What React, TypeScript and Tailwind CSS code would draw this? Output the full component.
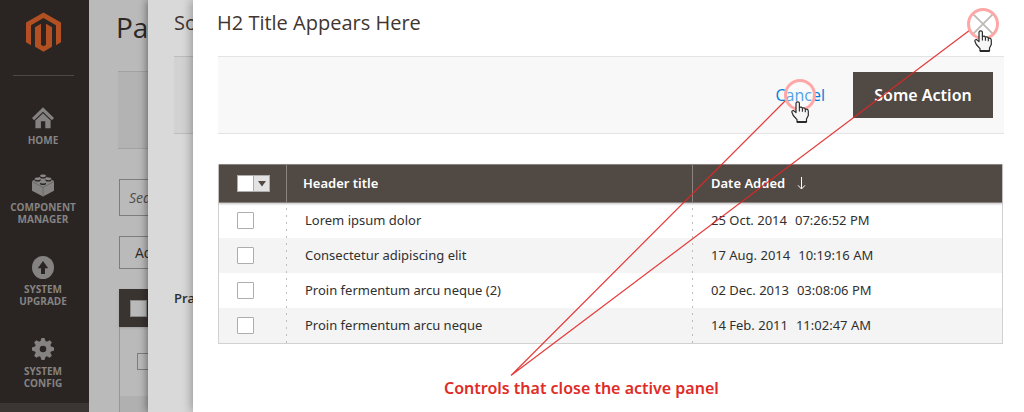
import React from "react";

const rows = [
  { title: "Lorem ipsum dolor", date: "25 Oct. 2014", time: "07:26:52 PM" },
  { title: "Consectetur adipiscing elit", date: "17 Aug. 2014", time: "10:19:16 AM" },
  { title: "Proin fermentum arcu neque (2)", date: "02 Dec. 2013", time: "03:08:06 PM" },
  { title: "Proin fermentum arcu neque", date: "14 Feb. 2011", time: "11:02:47 AM" },
];

function Logo() {
  return (
    <svg width="35" height="40" viewBox="0 0 35 40" fill="#b35023" role="img" aria-label="Logo">
      <path d="M17.5 0.4 35 10.4V30.3L30 33.2V13.3L17.5 6.1 5 13.3V33.2L0 30.3V10.4Z" />
      <path d="M9 15.2 15 11.8V32.8L17.5 34.3 20 32.8V11.8L26 15.2V34.8L17.5 39.8 9 34.8Z" />
    </svg>
  );
}

function HomeIcon() {
  return (
    <svg width="22" height="22" viewBox="0 0 22 22" fill="#858382" aria-hidden="true">
      <path d="M11 0.2 22 11 19.9 13.2 11 4.7 2.1 13.2 0 11Z" />
      <path d="M11 6.2 18.6 13.5V21.3H13.3V14.3H8.9V21.3H3.4V13.5Z" />
    </svg>
  );
}

function BrickIcon() {
  return (
    <svg width="22" height="23" viewBox="0 0 22 23" aria-hidden="true">
      <path d="M11 1.2 22 6.9V16.8L11 22.6 0 16.8V6.9Z" fill="#858382" />
      <path d="M0 7.5 11 13.4 22 7.5M11 13.4V22.6" stroke="#65615f" strokeWidth="0.8" fill="none" />
      {[
        [11, 2],
        [5.6, 5],
        [16.4, 5],
        [11, 8.4],
      ].map(([cx, cy]) => (
        <g key={`${cx}-${cy}`}>
          <ellipse cx={cx} cy={cy + 1} rx="3" ry="1.5" fill="#2a2522" />
          <ellipse cx={cx} cy={cy - 0.2} rx="3" ry="1.4" fill="#8b8988" />
        </g>
      ))}
    </svg>
  );
}

function UpgradeIcon() {
  return (
    <svg width="22" height="23" viewBox="0 0 22 23" aria-hidden="true">
      <ellipse cx="11" cy="11.5" rx="11" ry="11.5" fill="#858382" />
      <path d="M11 5 16.2 12.2H13V18H9V12.2H5.8Z" fill="#2a2522" />
    </svg>
  );
}

function GearIcon() {
  return (
    <svg width="22" height="22" viewBox="0 0 22 22" aria-hidden="true">
      <g fill="#858382">
        <circle cx="11" cy="11" r="8.2" />
        {[0, 45, 90, 135, 180, 225, 270, 315].map((a) => (
          <path key={a} d="M8.1 4.2 9.5 0H12.5L13.9 4.2Z" transform={`rotate(${a} 11 11)`} />
        ))}
      </g>
      <circle cx="11" cy="11" r="3.3" fill="#2a2522" />
    </svg>
  );
}

function Pointer() {
  return (
    <span className="pointer-events-none absolute top-1/2 left-1/2 -mt-4 -ml-4 block h-14 w-8">
      <svg width="32" height="48" viewBox="0 0 32 48" aria-hidden="true">
        <circle cx="16" cy="16" r="14.5" fill="#ffffff" fillOpacity="0.3" stroke="#ffa6a6" strokeWidth="3" />
        <path
          d="M12 24.3Q12 22.8 13.7 22.8 15.4 22.8 15.4 24.3V28.5Q17.6 27.4 18.4 29.2 20.6 28.3 21.3 30.3 24.3 29.6 24.3 32.5V36.5L22.5 40V43H13V40.6L9.3 36.5 7.9 33.3Q7.6 31.2 9.7 31.6L12 33.6Z"
          fill="#f6f6f6"
          stroke="#2b2b2b"
          strokeWidth="1.2"
          strokeLinejoin="round"
        />
        <path d="M13 43H22.5" stroke="#1f1f1f" strokeWidth="1.8" />
        <path d="M15.4 28.5V32.5M18.4 29.2V32.8M21.3 30.5V33.2" stroke="#2b2b2b" strokeWidth="1.1" />
      </svg>
    </span>
  );
}

function NavItem({ icon, lines }: { icon: React.ReactNode; lines: string[] }) {
  return (
    <a href="#" className="flex flex-col items-center gap-1 text-[10px] leading-3 font-bold text-[#858382]">
      <span className="flex h-6 items-center">{icon}</span>
      <span className="flex flex-col items-center">
        {lines.map((line) => (
          <span key={line}>{line}</span>
        ))}
      </span>
    </a>
  );
}

function Sidebar() {
  return (
    <nav className="flex w-[89px] shrink-0 flex-col bg-[#2a2522]">
      <div className="mr-[15px] ml-[13px] flex h-[76px] justify-center border-b border-[#4b4745] pt-3">
        <Logo />
      </div>
      <div className="flex flex-col pt-[30px] pr-[3px]">
        <div className="h-[67px]"><NavItem icon={<HomeIcon />} lines={["HOME"]} /></div>
        <div className="h-[82px]"><NavItem icon={<BrickIcon />} lines={["COMPONENT", "MANAGER"]} /></div>
        <div className="h-[82px]"><NavItem icon={<UpgradeIcon />} lines={["SYSTEM", "UPGRADE"]} /></div>
        <div className="h-[66px]"><NavItem icon={<GearIcon />} lines={["SYSTEM", "CONFIG"]} /></div>
      </div>
      <div className="grow bg-[#3b3633]" />
    </nav>
  );
}

function BasePage() {
  return (
    <section className="w-[59px] shrink-0 overflow-hidden bg-[#bababa] pl-[30px] whitespace-nowrap text-[#2d2825]">
      <h1 className="-ml-[3px] flex h-[71px] items-start pt-2 text-[28px] leading-[38px]">Pa</h1>
      <div className="-ml-px h-[78px] border-y border-[#a2a2a2] bg-[#b3b3b3]" />
      <input
        aria-label="Search"
        placeholder="Sea"
        className="mt-[30px] block h-[37px] w-40 border border-[#7d7d7d] bg-transparent px-[9px] text-sm italic placeholder:text-[#504d4b]"
      />
      <button type="button" className="mt-5 block h-[33px] w-40 border border-[#7d7d7d] pl-[15px] text-left text-sm">
        Ad
      </button>
      <div className="mt-5 flex h-[38px] w-40 items-center bg-[#3a3430] pl-[11px] shadow-sm">
        <input type="checkbox" aria-label="Select page rows" className="size-[17px] appearance-none border border-[#8c8c8c] bg-[#bababa]" />
      </div>
      <div className="flex h-[69px] w-40 items-center border-l border-[#969696] pl-[17px]">
        <input type="checkbox" aria-label="Select page row" className="size-[17px] appearance-none border border-[#7d7d7d]" />
      </div>
      <div className="h-4 w-40 border-l border-[#969696] bg-[#b0b0b0]" />
    </section>
  );
}

function FirstPanel() {
  return (
    <section className="relative w-[45px] shrink-0 bg-[#d9d9d9] shadow-[-1px_0_8px_rgba(0,0,0,0.45)]">
      <div className="overflow-hidden pl-[26px] whitespace-nowrap text-[#3d3632]">
        <h2 className="h-14 pt-2 text-xl leading-[30px]">So</h2>
        <div className="h-[78px] border-y border-[#bcbcbc] bg-[#d2d2d2]" />
        <p className="pt-[154px] text-[13px] leading-5 font-semibold text-[#2d2d2d]">Pra</p>
      </div>
    </section>
  );
}

const cellDots =
  "bg-[repeating-linear-gradient(to_bottom,transparent_0_5px,#bdbdbd_5px_7px)] bg-[length:1px_100%] bg-no-repeat";
const checkbox = "block size-[17px] appearance-none rounded-[1px] border border-[#adadad] bg-white";

function DataTable() {
  return (
    <table className="mt-[30px] w-full table-fixed border-separate border-spacing-0 border border-t-0 border-[#d1d1d1] text-left font-['Noto_Sans',sans-serif] text-[13px] text-[#303030]">
      <thead className="text-white shadow-[0_1px_2px_rgba(0,0,0,0.25)]">
        <tr className="h-[39px] bg-[#514943]">
          <th className="w-[67px] border-y border-[#8a837f] pl-[18px]">
            <span className="flex">
              <input type="checkbox" aria-label="Select all" className="size-[17px] appearance-none border border-[#adadad] bg-white" />
              <button type="button" aria-label="Selection options" className="-ml-px flex h-[17px] w-[17px] items-center justify-center border border-[#adadad] bg-[#e3e3e3]">
                <svg width="8" height="6" viewBox="0 0 8 6" aria-hidden="true"><path d="M0 0H8L4 5.5Z" fill="#514943" /></svg>
              </button>
            </span>
          </th>
          <th className="border-y border-l border-[#8a837f] pl-4 font-semibold">Header title</th>
          <th className="w-[310px] border-y border-l border-[#8a837f] pl-[18px] font-semibold">
            <span className="flex items-center gap-3">
              Date Added
              <svg width="9" height="13" viewBox="0 0 9 13" fill="none" stroke="#fff" aria-hidden="true"><path d="M4.5 0V11.5M1 8.3 4.5 12 8 8.3" /></svg>
            </span>
          </th>
        </tr>
      </thead>
      <tbody>
        {rows.map((row) => (
          <tr key={row.date} className="h-[35px] even:bg-[#f4f4f4]">
            <td className="pl-[18px]">
              <input type="checkbox" aria-label={row.title} className={checkbox} />
            </td>
            <td className={`pl-[19px] ${cellDots}`}>{row.title}</td>
            <td className={`pl-[19px] ${cellDots}`}>
              <span className="flex gap-2"><span>{row.date}</span><span>{row.time}</span></span>
            </td>
          </tr>
        ))}
      </tbody>
    </table>
  );
}

function ActivePanel() {
  return (
    <main className="relative min-w-0 grow bg-white pr-5 pl-[25px] shadow-[-1px_0_10px_rgba(0,0,0,0.35)]">
      <header className="flex h-14 items-start justify-between pt-2">
        <h2 className="-ml-px text-xl leading-[30px] text-[#41362f]">H2 Title Appears Here</h2>
        <button type="button" aria-label="Close" className="relative z-10 mt-1 mr-[9px] flex size-6 items-center justify-center">
          <svg width="20" height="20" viewBox="0 0 20 20" stroke="#a09c96" strokeWidth="1.7" aria-hidden="true"><path d="M0.5 0.5 19.5 19.5M19.5 0.5 0.5 19.5" /></svg>
          <Pointer />
        </button>
      </header>
      <div className="flex h-[78px] items-center justify-end gap-7 border-y border-[#e3e3e3] bg-[#f8f8f8] pr-[11px]">
        <button type="button" className="relative z-10 text-base text-[#007bdb]">
          Cancel
          <Pointer />
        </button>
        <button type="button" className="h-[46px] w-[140px] bg-[#514943] font-['Noto_Sans',sans-serif] text-base font-semibold text-white">Some Action</button>
      </div>
      <div className="pr-px">
        <DataTable />
      </div>
      <p className="mt-8 pl-[226px] font-['Noto_Sans',sans-serif] text-base leading-6 font-semibold text-[#e02b27]">Controls that close the active panel</p>
      <svg className="pointer-events-none absolute top-0 right-0" width="831" height="412" viewBox="0 0 831 412" fill="none" stroke="#e22626" strokeOpacity="0.9" strokeWidth="1.2" aria-hidden="true">
        <path d="M594 99 318 375.5 777 30" />
      </svg>
    </main>
  );
}

export default function App() {
  return (
    <div className="flex min-h-screen overflow-hidden bg-white font-['Open_Sans','Noto_Sans',sans-serif]">
      <Sidebar />
      <BasePage />
      <FirstPanel />
      <ActivePanel />
    </div>
  );
}
